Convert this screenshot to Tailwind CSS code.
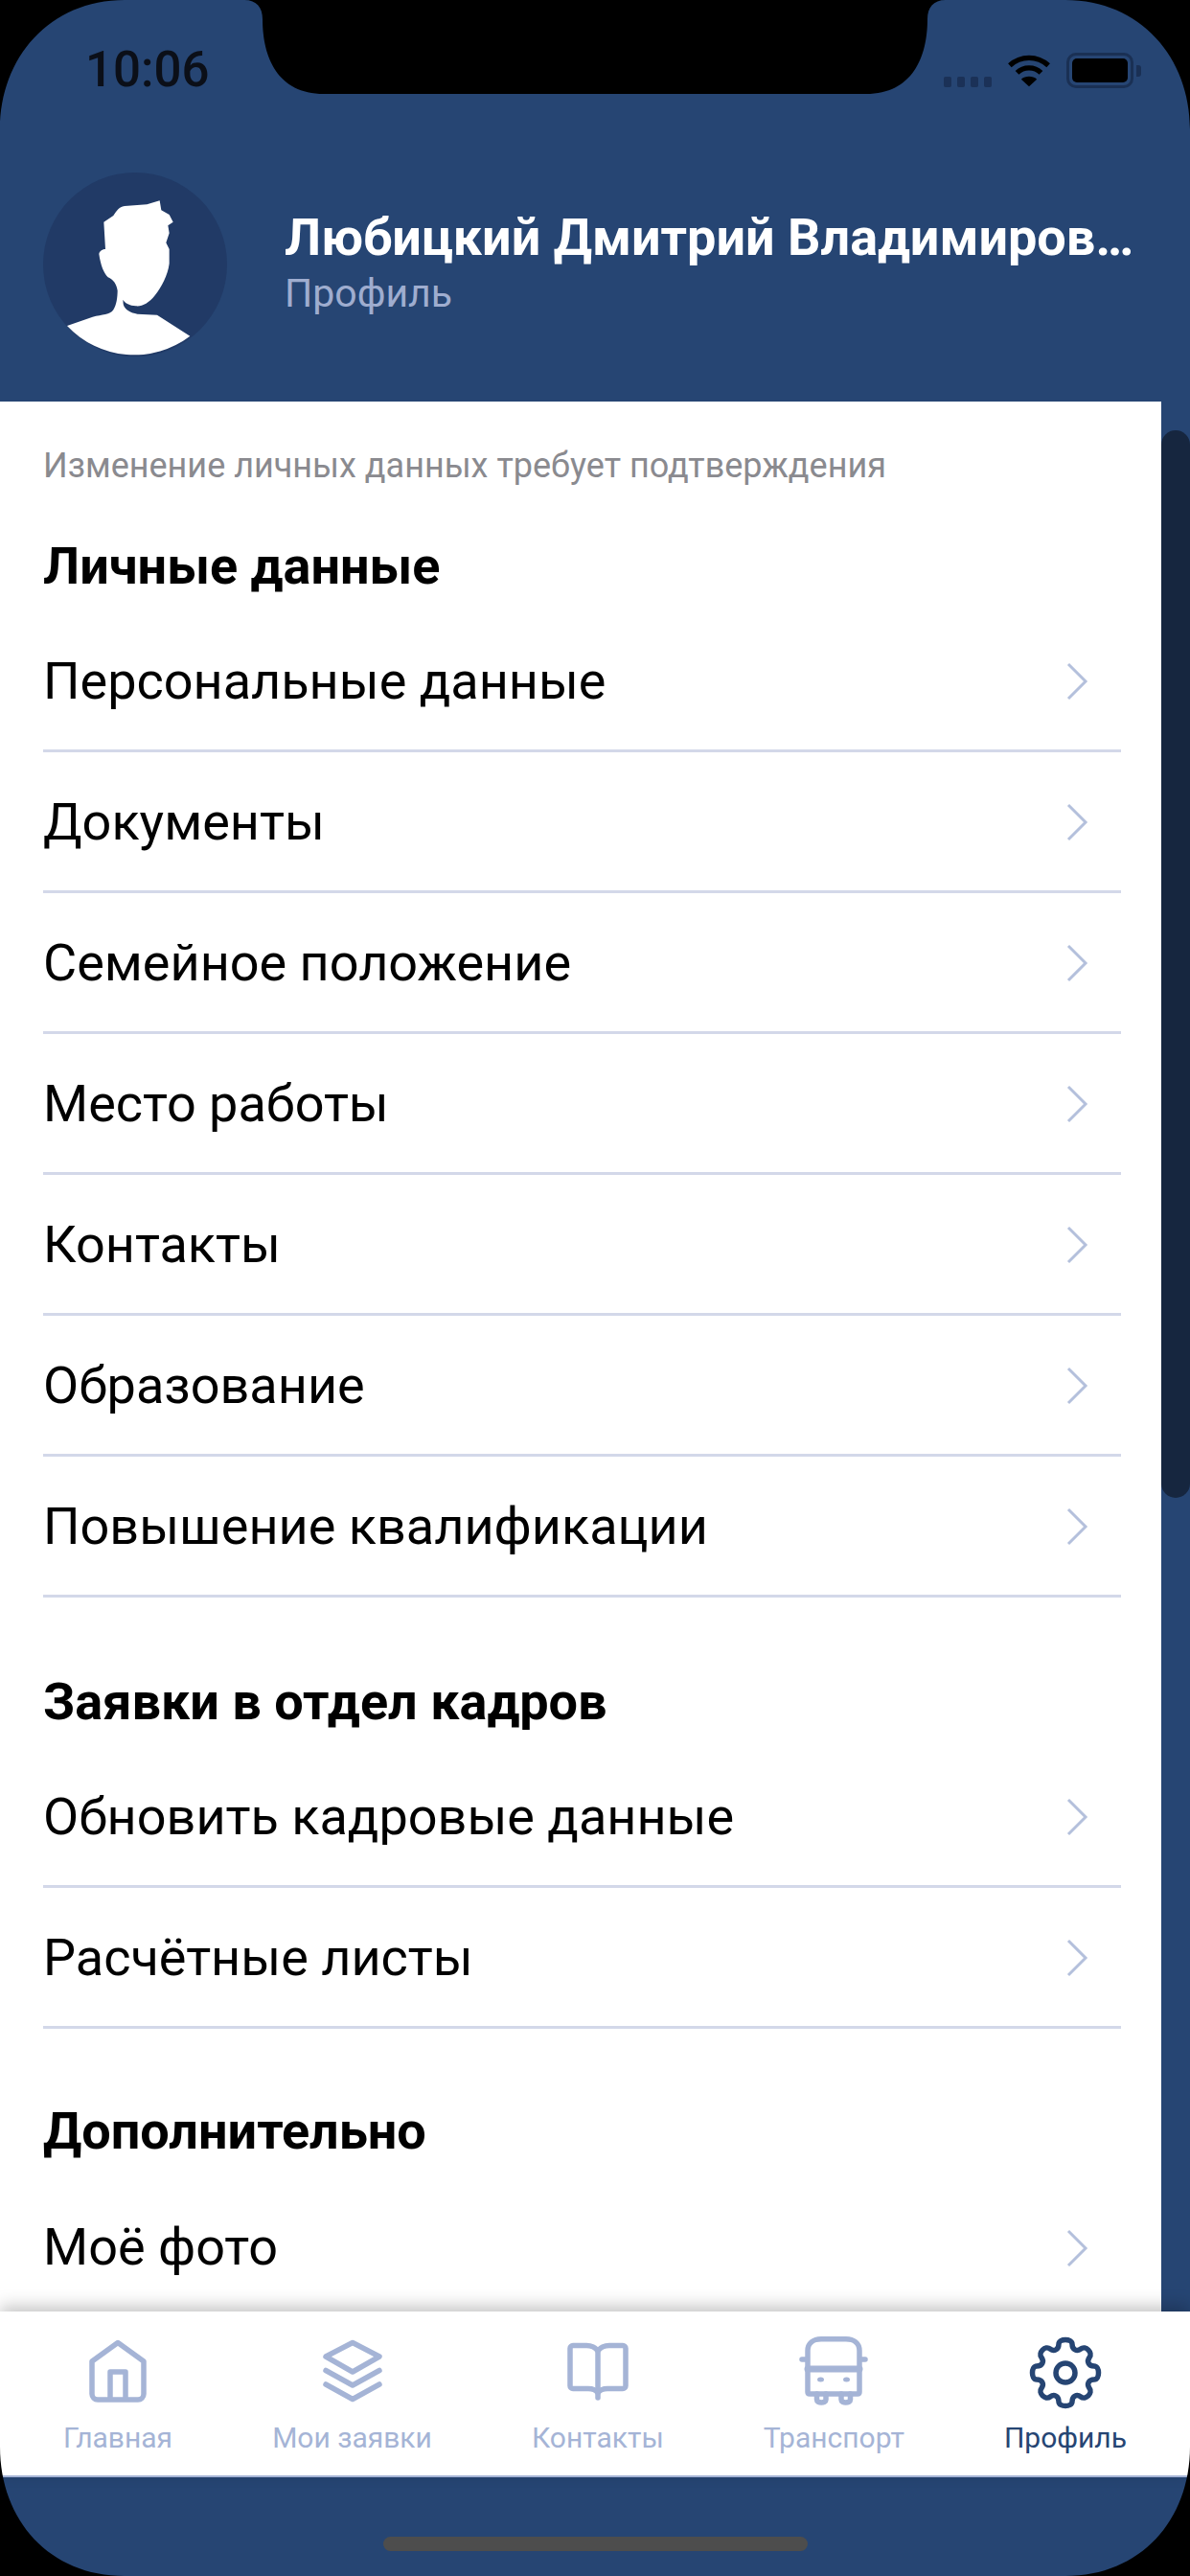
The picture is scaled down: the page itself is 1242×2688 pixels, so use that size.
<!DOCTYPE html>
<html lang="ru">
<head>
    <meta charset="UTF-8">
    <meta name="viewport" content="width=device-width, initial-scale=1.0">
    <script src="https://cdn.jsdelivr.net/npm/@tailwindcss/browser@4"></script>
    <title>Профиль</title>
</head>
<body class="bg-black">
    <div class="relative w-[1242px] h-[2688px] overflow-hidden bg-[#264573] font-['Roboto',sans-serif] flex flex-col">

        <!-- status bar + profile header -->
        <header class="h-[419px] shrink-0 flex flex-col">
            <div class="h-[180px] shrink-0 flex justify-between items-start pl-[89px] pr-[51px] pt-[44px]">
                <span class="text-[51px] leading-[58px] font-medium text-[#0b0f18]">10:06</span>
                <div class="flex items-center gap-[16px] pt-[11px]">
                    <div class="flex gap-[6px] mt-[24px]">
                        <span class="w-[8px] h-[11px] rounded-[2px] bg-[#1b3157]"></span>
                        <span class="w-[8px] h-[11px] rounded-[2px] bg-[#1b3157]"></span>
                        <span class="w-[8px] h-[11px] rounded-[2px] bg-[#1b3157]"></span>
                        <span class="w-[8px] h-[11px] rounded-[2px] bg-[#1b3157]"></span>
                    </div>
                    <svg width="46" height="36" viewBox="0 0 48 36" fill="none" stroke="#000" stroke-width="5.5">
                        <path d="M3 12 C15 1 33 1 45 12"/>
                        <path d="M11 20 C18 13 30 13 37 20"/>
                        <path d="M24 35 L15.500 27 C20 23 28 23 32.500 27 Z" fill="#000" stroke="none"/>
                    </svg>
                    <div class="flex items-center gap-[3px]">
                        <div class="w-[70px] h-[37px] rounded-[10px] border-[3px] border-[#1a3054] p-[3px]">
                            <div class="w-full h-full rounded-[5px] bg-black"></div>
                        </div>
                        <span class="w-[5px] h-[12px] rounded-r-[3px] bg-[#1a3054]"></span>
                    </div>
                </div>
            </div>
            <div class="flex items-start pl-[45px]">
                <svg class="shrink-0" width="192" height="192" viewBox="75 60 576 576">
                    <circle cx="363" cy="348" r="288" fill="#213a66"/>
                    <path fill="#fff" d="M440 148 L445 178 L470 192 L482 215 L466 226 L470 250 L460 280 L470 300 L470 345 C466 380 445 420 425 445 C405 470 385 480 365 478 C345 476 333 470 325 458 L326 472 C330 490 350 500 370 503 L432 506 L535 572 A288 288 0 0 1 150 540 L230 512 C260 505 285 505 295 490 C305 475 308 450 308 430 C305 410 295 395 278 388 C265 375 255 350 250 315 C252 305 262 300 270 300 L265 215 L295 195 C305 180 312 168 330 165 L400 160 Z"/>
                </svg>
                <div class="ml-[60px] pt-[35px]">
                    <div class="text-[54px] leading-[66px] font-bold text-white whitespace-nowrap">Любицкий Дмитрий Владимиров…</div>
                    <div class="mt-[1px] text-[41px] leading-[48px] text-[#9fadcf]">Профиль</div>
                </div>
            </div>
        </header>

        <!-- scrolling list + scrollbar -->
        <div class="flex-1 min-h-0 flex">
            <main class="w-[1212px] shrink-0 bg-white overflow-hidden pl-[45px] pr-[42px]">
                <p class="pt-[47px] text-[36px] leading-[40px] text-[#8a8a8f]">Изменение личных данных требует подтверждения</p>

                <h2 class="mt-[55px] text-[54px] leading-[60px] font-bold text-black">Личные данные</h2>
                <ul>
                    <li class="h-[147px] mt-[17px] flex items-center justify-between border-b-[3px] border-[#d3d8e9] text-[54px] text-black">Персональные данные<svg class="mr-[34px] mt-[2px]" width="24" height="40" viewBox="0 0 24 40" fill="none" stroke="#b4c0dc" stroke-width="3"><path d="M3 2 L21 20 L3 38"/></svg></li>
                    <li class="h-[147px] flex items-center justify-between border-b-[3px] border-[#d3d8e9] text-[54px] text-black">Документы<svg class="mr-[34px] mt-[2px]" width="24" height="40" viewBox="0 0 24 40" fill="none" stroke="#b4c0dc" stroke-width="3"><path d="M3 2 L21 20 L3 38"/></svg></li>
                    <li class="h-[147px] flex items-center justify-between border-b-[3px] border-[#d3d8e9] text-[54px] text-black">Семейное положение<svg class="mr-[34px] mt-[2px]" width="24" height="40" viewBox="0 0 24 40" fill="none" stroke="#b4c0dc" stroke-width="3"><path d="M3 2 L21 20 L3 38"/></svg></li>
                    <li class="h-[147px] flex items-center justify-between border-b-[3px] border-[#d3d8e9] text-[54px] text-black">Место работы<svg class="mr-[34px] mt-[2px]" width="24" height="40" viewBox="0 0 24 40" fill="none" stroke="#b4c0dc" stroke-width="3"><path d="M3 2 L21 20 L3 38"/></svg></li>
                    <li class="h-[147px] flex items-center justify-between border-b-[3px] border-[#d3d8e9] text-[54px] text-black">Контакты<svg class="mr-[34px] mt-[2px]" width="24" height="40" viewBox="0 0 24 40" fill="none" stroke="#b4c0dc" stroke-width="3"><path d="M3 2 L21 20 L3 38"/></svg></li>
                    <li class="h-[147px] flex items-center justify-between border-b-[3px] border-[#d3d8e9] text-[54px] text-black">Образование<svg class="mr-[34px] mt-[2px]" width="24" height="40" viewBox="0 0 24 40" fill="none" stroke="#b4c0dc" stroke-width="3"><path d="M3 2 L21 20 L3 38"/></svg></li>
                    <li class="h-[147px] flex items-center justify-between border-b-[3px] border-[#d3d8e9] text-[54px] text-black">Повышение квалификации<svg class="mr-[34px] mt-[2px]" width="24" height="40" viewBox="0 0 24 40" fill="none" stroke="#b4c0dc" stroke-width="3"><path d="M3 2 L21 20 L3 38"/></svg></li>
                </ul>

                <h2 class="mt-[79px] text-[54px] leading-[60px] font-bold text-black">Заявки в отдел кадров</h2>
                <ul>
                    <li class="h-[147px] mt-[17px] flex items-center justify-between border-b-[3px] border-[#d3d8e9] text-[54px] text-black">Обновить кадровые данные<svg class="mr-[34px] mt-[2px]" width="24" height="40" viewBox="0 0 24 40" fill="none" stroke="#b4c0dc" stroke-width="3"><path d="M3 2 L21 20 L3 38"/></svg></li>
                    <li class="h-[147px] flex items-center justify-between border-b-[3px] border-[#d3d8e9] text-[54px] text-black">Расчётные листы<svg class="mr-[34px] mt-[2px]" width="24" height="40" viewBox="0 0 24 40" fill="none" stroke="#b4c0dc" stroke-width="3"><path d="M3 2 L21 20 L3 38"/></svg></li>
                </ul>

                <h2 class="mt-[77px] text-[54px] leading-[60px] font-bold text-black">Дополнительно</h2>
                <ul>
                    <li class="h-[147px] mt-[17px] flex items-center justify-between text-[54px] text-black">Моё фото<svg class="mr-[34px] mt-[2px]" width="24" height="40" viewBox="0 0 24 40" fill="none" stroke="#b4c0dc" stroke-width="3"><path d="M3 2 L21 20 L3 38"/></svg></li>
                </ul>
            </main>
            <div class="flex-1 pt-[30px]">
                <div class="h-[1114px] rounded-t-[15px] rounded-b-[15px] bg-[#16263f]"></div>
            </div>
        </div>

        <!-- tab bar -->
        <nav class="relative h-[173px] shrink-0 bg-white border-b-[2px] border-[#a5b4d6] flex justify-between px-[66px] pt-[24px] text-[30px] leading-[36px] text-[#a5b4d6] shadow-[0_-6px_16px_rgba(0,0,0,0.22)]">
            <a class="flex flex-col items-center">
                <svg width="80" height="80" viewBox="0 0 80 80" fill="none" stroke="#a5b4d6" stroke-width="5.500" stroke-linejoin="round">
                    <path d="M40 8.500 L67 28 V62 a6 6 0 0 1 -6 6 H19 a6 6 0 0 1 -6 -6 V28 Z"/>
                    <path d="M32 68 V39 H48 V68"/>
                </svg>
                <span class="mt-[10px]">Главная</span>
            </a>
            <a class="flex flex-col items-center">
                <svg width="80" height="80" viewBox="0 0 80 80" fill="none" stroke="#a5b4d6" stroke-width="5.500" stroke-linecap="round" stroke-linejoin="round">
                    <path d="M40 8.500 L68 23 L40 39 L12 23 Z"/>
                    <path d="M12 37.500 L40 53 L68 37.500"/>
                    <path d="M12 52 L40 67.500 L68 52"/>
                </svg>
                <span class="mt-[10px]">Мои заявки</span>
            </a>
            <a class="flex flex-col items-center">
                <svg width="80" height="80" viewBox="0 0 80 80" fill="none" stroke="#a5b4d6" stroke-width="5.500" stroke-linecap="round" stroke-linejoin="round">
                    <path d="M40 17 C37 13 33 11.500 28 11.500 H14 a3 3 0 0 0 -3 3 V53.500 a3 3 0 0 0 3 3 H30 C35 56.500 38 58 40 61 C42 58 45 56.500 50 56.500 H66 a3 3 0 0 0 3 -3 V14.500 a3 3 0 0 0 -3 -3 H52 C47 11.500 43 13 40 17 Z"/>
                    <path d="M40 17 V66"/>
                </svg>
                <span class="mt-[10px]">Контакты</span>
            </a>
            <a class="flex flex-col items-center">
                <svg width="80" height="80" viewBox="0 0 80 80" fill="none" stroke="#a5b4d6" stroke-width="5.500" stroke-linecap="round" stroke-linejoin="round">
                    <path d="M13 60 V17 C13 9 19 4.700 27 4.700 H53 C61 4.700 67 9 67 17 V60 C67 61.500 66 62 65 62 H15 C14 62 13 61.500 13 60 Z"/>
                    <path d="M13 36 H67" stroke-width="7"/>
                    <path d="M7 26 H12 M68 26 H73"/>
                    <path d="M22.500 62 V68 C22.500 72 32 72 32 68 V62 M48 62 V68 C48 72 57.500 72 57.500 68 V62"/>
                    <ellipse cx="26.500" cy="47" rx="3.500" ry="2.500" fill="#a5b4d6" stroke="none"/>
                    <ellipse cx="53.500" cy="47" rx="3.500" ry="2.500" fill="#a5b4d6" stroke="none"/>
                </svg>
                <span class="mt-[10px]">Транспорт</span>
            </a>
            <a class="flex flex-col items-center text-[#264573]">
                <svg width="80" height="80" viewBox="0 0 80 80" fill="none" stroke="#264573" stroke-width="5.500" stroke-linejoin="round">
                    <circle cx="40" cy="40" r="10"/>
                    <path d="M33 10 C33 4 47 4 47 10 C47 16 52 18 56 15 C61 11 69 19 65 24 C62 28 64 33 70 33 C76 33 76 47 70 47 C64 47 62 52 65 56 C69 61 61 69 56 65 C52 62 47 64 47 70 C47 76 33 76 33 70 C33 64 28 62 24 65 C19 69 11 61 15 56 C18 52 16 47 10 47 C4 47 4 33 10 33 C16 33 18 28 15 24 C11 19 19 11 24 15 C28 18 33 16 33 10 Z"/>
                </svg>
                <span class="mt-[10px]">Профиль</span>
            </a>
        </nav>

        <!-- home indicator strip -->
        <div class="h-[103px] shrink-0 flex justify-center pt-[62px]">
            <div class="w-[443px] h-[15px] rounded-full bg-[#4d4d4d]"></div>
        </div>

        <!-- device mask: rounded corners and notch -->
        <svg class="absolute inset-0 pointer-events-none" width="1242" height="2688" viewBox="0 0 1242 2688">
            <path fill="#000" fill-rule="evenodd" d="M0 0 H1242 V2688 H0 Z M130 0 H255 C268 0 274 8 274 20 C274 60 290 98 338 98 H904 C952 98 968 60 968 20 C968 8 974 0 987 0 H1112 C1190 0 1242 60 1242 135 V2553 C1242 2630 1190 2688 1112 2688 H130 C52 2688 0 2630 0 2553 V135 C0 60 52 0 130 0 Z"/>
        </svg>
    </div>
</body>
</html>
